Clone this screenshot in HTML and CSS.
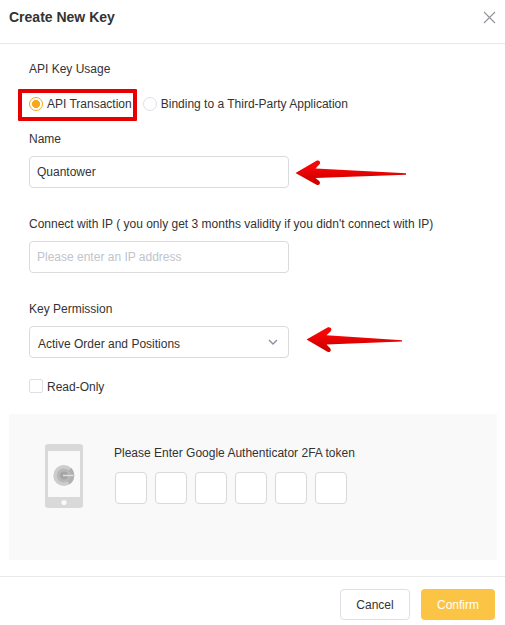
FILE: index.html
```html
<!DOCTYPE html>
<html lang="en">
<head>
<meta charset="utf-8">
<title>Create New Key</title>
<link rel="stylesheet" href="styles.css">
</head>
<body>
<div class="dialog">
  <header class="header">
    <h1 class="title">Create New Key</h1>
    <svg class="close" width="13" height="13" viewBox="0 0 13 13"><path d="M1 1l11 11M12 1L1 12" stroke="#909399" stroke-width="1.1" fill="none"/></svg>
  </header>
  <main class="body">
    <div class="label">API Key Usage</div>
    <div class="radios">
      <div class="option"><span class="radio checked"></span>API Transaction<span class="highlight"></span></div>
      <div class="option"><span class="radio"></span>Binding to a Third-Party Application</div>
    </div>
    <div class="field">
      <div class="label">Name</div>
      <div class="input">Quantower
        <svg class="arrow arrow-name" width="112" height="28" viewBox="0 0 112 28">
          <defs><linearGradient id="red" x1="0" y1="0" x2="0" y2="1"><stop offset="0.3" stop-color="#f50505"/><stop offset="0.75" stop-color="#d40000"/></linearGradient></defs>
          <path fill="url(#red)" d="M-0.5 14L20.5 1.8C23.5 0.8 25.3 3.8 23.2 5.6L19.5 9.5L110 14.2V15.8L19.5 19L23.2 22C25.2 24.2 23 27 20.5 25.8Z"/>
        </svg>
      </div>
    </div>
    <div class="field">
      <div class="label">Connect with IP ( you only get 3 months validity if you didn't connect with IP)</div>
      <div class="input placeholder">Please enter an IP address</div>
    </div>
    <div class="field">
      <div class="label">Key Permission</div>
      <div class="input select">Active Order and Positions
        <svg class="chevron" width="10" height="7" viewBox="0 0 10 7"><path d="M1 1l4 4 4-4" stroke="#8790a0" stroke-width="1.4" fill="none"/></svg>
        <svg class="arrow arrow-permission" width="98" height="28" viewBox="0 0 98 28">
          <path fill="url(#red)" d="M-0.5 13.5L20.5 1.5C23.5 0.5 25.7 3.5 23.5 5.5L19.5 9.3L95 14.2V15.6L19.5 18.5L23 22C25 24.2 23 27 20.5 25.8Z"/>
        </svg>
      </div>
    </div>
    <div class="readonly"><span class="checkbox"></span><span class="readonly-text">Read-Only</span></div>
  </main>
  <section class="auth">
    <svg class="phone" width="38" height="64" viewBox="0 0 38 64">
      <rect width="38" height="64" rx="3" fill="#d9d9d9"/>
      <rect x="3" y="7" width="32" height="46" fill="#f9f9f9"/>
      <circle cx="18.8" cy="31.5" r="10.5" fill="#cdcdcd"/>
      <path d="M18.8 31.5L26.2 24.1A10.5 10.5 0 0 1 24.5 40.3Z" fill="#b0b0b0"/>
      <circle cx="18.8" cy="31.5" r="7" fill="#b8b8b8"/>
      <circle cx="19" cy="31.5" r="4" fill="#a6a6a6"/>
      <path d="M18 31.5h10.5" stroke="#dedede" stroke-width="1.4"/>
      <circle cx="19" cy="58.5" r="2.6" fill="#f9f9f9"/>
    </svg>
    <div class="token">
      <div class="label">Please Enter Google Authenticator 2FA token</div>
      <div class="digits"><span></span><span></span><span></span><span></span><span></span><span></span></div>
    </div>
  </section>
  <footer class="footer">
    <div class="button cancel">Cancel</div>
    <div class="button confirm">Confirm</div>
  </footer>
</div>
</body>
</html>
```

FILE: styles.css
```css
* { box-sizing: border-box; }

body {
  margin: 0;
  background: #fff;
  color: #333;
  font: 12px/18px "Liberation Sans", Arial, sans-serif;
}

.dialog { height: 625px; overflow: hidden; }

.header {
  display: flex;
  justify-content: space-between;
  height: 44px;
  padding: 8px 9px 0;
  border-bottom: 1px solid #e8e8e8;
}

.title { margin: 0; font-size: 14px; line-height: 18px; }
.close { margin-top: 3px; }

.body { height: 370px; padding: 16px 29px 0; }

.radios { display: flex; gap: 11px; margin: 17px 0; }
.option { position: relative; display: flex; align-items: center; gap: 4px; }

.radio {
  width: 14px;
  height: 14px;
  border: 1px solid #dcdfe6;
  border-radius: 50%;
}

.radio.checked {
  border-color: #f7a81b;
  background: radial-gradient(circle, #f7a81b 3.7px, #fff 4.4px);
}

.highlight {
  position: absolute;
  left: -11px;
  top: -6px;
  width: 119px;
  height: 32px;
  border: 4px solid #e60000;
  border-radius: 1px;
}

.field { margin-bottom: 27px; }

.input {
  position: relative;
  width: 260px;
  height: 32px;
  margin-top: 8px;
  padding: 0 7px;
  border: 1px solid #d9dbdf;
  border-radius: 4px;
  line-height: 30px;
}

.placeholder { color: #c0c4cc; }

.select {
  display: flex;
  justify-content: space-between;
  padding: 1px 10px 0 8px;
  line-height: 32px;
}

.chevron { margin-top: 11px; }
.arrow { position: absolute; overflow: visible; }
.arrow-name { left: 266px; top: 2px; }
.arrow-permission { left: 277px; top: -1px; }

.readonly { display: flex; align-items: center; gap: 4px; margin-top: -8px; }
.readonly-text { padding-top: 1px; line-height: 19px; margin-bottom: -2px; }
.checkbox { width: 14px; height: 14px; border: 1px solid #dcdfe6; border-radius: 2px; }

.auth {
  display: flex;
  gap: 31px;
  height: 146px;
  margin: 0 8px 0 9px;
  padding: 30px 36px 0;
  background: #f9f9f9;
}

.digits { display: flex; gap: 8px; margin: 10px 0 0 1px; }
.digits span { width: 32px; height: 32px; border: 1px solid #d9d9d9; border-radius: 4px; background: #fff; }

.footer {
  display: flex;
  justify-content: flex-end;
  gap: 11px;
  margin-top: 16px;
  padding: 12px 10px 0 0;
  border-top: 1px solid #e8e8e8;
}

.button { height: 31px; border-radius: 4px; line-height: 32px; text-align: center; }
.cancel { width: 70px; border: 1px solid #dcdfe6; line-height: 30px; }
.confirm { width: 74px; background: #fbc444; color: #fff; }
```
